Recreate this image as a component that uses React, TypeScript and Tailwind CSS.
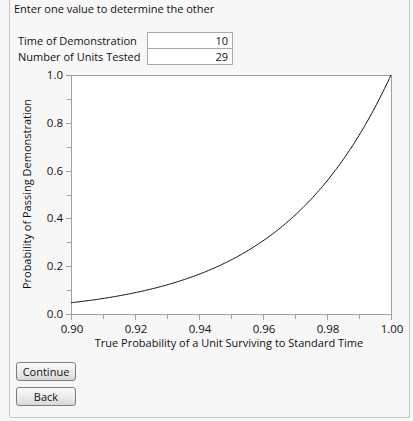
import * as React from 'react';

const FONT = '"Open Sans", "Noto Sans", "Liberation Sans", sans-serif';

// frame of the plot, in page pixels
const X0 = 71;
const X1 = 391;
const Y0 = 75;
const Y1 = 314;

const px = (p: number) => X0 + ((p - 0.9) / 0.1) * (X1 - X0);
const py = (v: number) => Y1 - v * (Y1 - Y0);

function curvePath(n: number) {
  const pts: string[] = [];
  for (let i = 0; i <= 200; i++) {
    const p = 0.9 + (0.1 * i) / 200;
    const v = Math.pow(p, n);
    pts.push(`${i === 0 ? 'M' : 'L'}${px(p).toFixed(2)},${py(v).toFixed(2)}`);
  }
  return pts.join(' ');
}

const Chart = () => {
  const yMajor = [0, 0.2, 0.4, 0.6, 0.8, 1.0];
  const yMinor = [0.1, 0.3, 0.5, 0.7, 0.9];
  const xMajor = [0.9, 0.92, 0.94, 0.96, 0.98, 1.0];
  const xMinor = [0.91, 0.93, 0.95, 0.97, 0.99];

  return (
    <svg width={398} height={288} className="block" style={{ fontFamily: FONT }}>
      <g transform="translate(-10,-66)">
        <rect x={X0 + 0.5} y={Y0 + 0.5} width={X1 - X0} height={Y1 - Y0} fill="#ffffff" stroke="#a0a0a0" />
        {yMajor.map((v) => (
          <g key={`ym${v}`}>
            <line x1={X0 - 5} x2={X0} y1={Math.round(py(v)) + 0.5} y2={Math.round(py(v)) + 0.5} stroke="#a0a0a0" />
            <text x={63} y={Math.round(py(v)) + 4} textAnchor="end" fontSize={11.5} fill="#111">
              {v.toFixed(1)}
            </text>
          </g>
        ))}
        {yMinor.map((v) => (
          <line key={`yn${v}`} x1={X0 - 4} x2={X0} y1={Math.round(py(v)) + 0.5} y2={Math.round(py(v)) + 0.5} stroke="#a0a0a0" />
        ))}
        {xMajor.map((p) => (
          <g key={`xm${p}`}>
            <line x1={Math.round(px(p)) + 0.5} x2={Math.round(px(p)) + 0.5} y1={Y1 + 1} y2={Y1 + 6} stroke="#a0a0a0" />
            <text x={Math.round(px(p)) + 1} y={333} textAnchor="middle" fontSize={11.5} fill="#111">
              {p.toFixed(2)}
            </text>
          </g>
        ))}
        {xMinor.map((p) => (
          <line key={`xn${p}`} x1={Math.round(px(p)) + 0.5} x2={Math.round(px(p)) + 0.5} y1={Y1 + 1} y2={Y1 + 5} stroke="#a0a0a0" />
        ))}
        <path d={curvePath(29)} fill="none" stroke="#111" strokeWidth={1} />
        <text x={229} y={347} textAnchor="middle" fontSize={11} fill="#111">
          True Probability of a Unit Surviving to Standard Time
        </text>
        <text x={31} y={194} textAnchor="middle" fontSize={11} fill="#111" transform="rotate(-90 31 194)">
          Probability of Passing Demonstration
        </text>
      </g>
    </svg>
  );
};

const JmpButton = ({ label }: { label: string }) => (
  <button
    type="button"
    className="flex h-[19px] w-[60px] items-center justify-center rounded-[3px] border border-[#7d7d7d] bg-gradient-to-b from-[#fbfbfb] via-[#ececec] to-[#d8d8d8] text-[11px] leading-none text-[#111]"
  >
    {label}
  </button>
);

export default function App() {
  return (
    <div className="h-[421px] w-[413px] overflow-hidden bg-[#f7f7f7] text-[#111]" style={{ fontFamily: FONT }}>
      <div className="ml-[9px] -mt-[4px] h-[422px] w-[401px] rounded-b-[3px] border border-t-0 border-[#c6c6c6]">
        {/* Prompt */}
        <div className="pl-[4px] pt-[5px] text-[11px] leading-[15px]">Enter one value to determine the other</div>

        {/* Inputs */}
        <div className="mt-[16px] flex pl-[8px]">
          <div className="flex w-[129px] flex-col whitespace-nowrap pt-[1px] text-[11px] leading-[16px]">
            <span>Time of Demonstration</span>
            <span>Number of Units Tested</span>
          </div>
          <div className="flex w-[86px] flex-col border border-[#a8a8a8] bg-white text-[11px] leading-[15px]">
            <div className="border-b border-[#a8a8a8] pr-[4px] text-right">10</div>
            <div className="pr-[4px] text-right">29</div>
          </div>
        </div>

        <div className="mt-[1px]">
          <Chart />
        </div>

        {/* Actions */}
        <div className="mt-[8px] flex flex-col gap-[6px] pl-[6px]">
          <JmpButton label="Continue" />
          <JmpButton label="Back" />
        </div>
      </div>
    </div>
  );
}
